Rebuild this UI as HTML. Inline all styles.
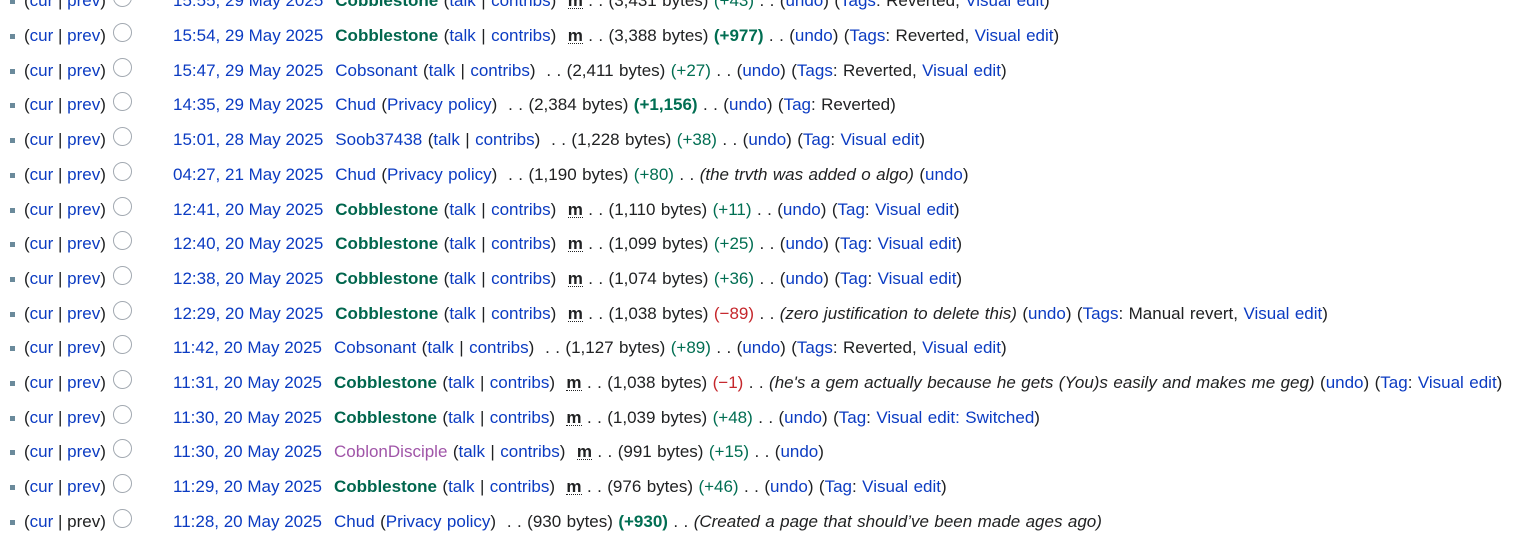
<!DOCTYPE html>
<html><head><meta charset="utf-8"><style>
body{margin:0;width:1516px;height:543px;overflow:hidden;background:#fff;font-family:"Liberation Sans",Arial,sans-serif;font-size:17px;color:#202122;word-spacing:0.7px}
.r{position:absolute;left:0;height:22px;line-height:22px;white-space:nowrap}
.b{position:absolute;left:10px;top:9px;width:5px;height:5px;background:#6a8a9b}
.cp{position:absolute;left:24px;top:0;word-spacing:0}
.rd{position:absolute;left:113px;top:-2px;width:17px;height:17px;border:1px solid #a2a9b1;border-radius:50%}
.t{position:absolute;left:173px;top:0}
.d{margin-right:12px}
a{color:#0b3bc2;text-decoration:none}
.g{color:#00664d;font-weight:bold}
.pos{color:#006e52}
.neg{color:#c5262b}
.pu{color:#a055a8}
.m{font-weight:bold;border-bottom:1px dotted #202122;line-height:14px;display:inline-block;margin-left:6px}
i{font-style:italic}
</style></head><body>
<div id="c"></div>
<script>
const rows=[
["15:55, 29 May 2025",'<a class="g">Cobblestone</a> (<a>talk</a> | <a>contribs</a>) <span class="m">m</span> . . (3,431 bytes) <span class="pos">(+43)</span> . . (<a>undo</a>) (<a>Tags</a>: Reverted, <a>Visual edit</a>)'],
["15:54, 29 May 2025",'<a class="g">Cobblestone</a> (<a>talk</a> | <a>contribs</a>) <span class="m">m</span> . . (3,388 bytes) <b class="pos">(+977)</b> . . (<a>undo</a>) (<a>Tags</a>: Reverted, <a>Visual edit</a>)'],
["15:47, 29 May 2025",'<a>Cobsonant</a> (<a>talk</a> | <a>contribs</a>) &nbsp;. . (2,411 bytes) <span class="pos">(+27)</span> . . (<a>undo</a>) (<a>Tags</a>: Reverted, <a>Visual edit</a>)'],
["14:35, 29 May 2025",'<a>Chud</a> (<a>Privacy policy</a>) &nbsp;. . (2,384 bytes) <b class="pos">(+1,156)</b> . . (<a>undo</a>) (<a>Tag</a>: Reverted)'],
["15:01, 28 May 2025",'<a>Soob37438</a> (<a>talk</a> | <a>contribs</a>) &nbsp;. . (1,228 bytes) <span class="pos">(+38)</span> . . (<a>undo</a>) (<a>Tag</a>: <a>Visual edit</a>)'],
["04:27, 21 May 2025",'<a>Chud</a> (<a>Privacy policy</a>) &nbsp;. . (1,190 bytes) <span class="pos">(+80)</span> . . <i>(the trvth was added o algo)</i> (<a>undo</a>)'],
["12:41, 20 May 2025",'<a class="g">Cobblestone</a> (<a>talk</a> | <a>contribs</a>) <span class="m">m</span> . . (1,110 bytes) <span class="pos">(+11)</span> . . (<a>undo</a>) (<a>Tag</a>: <a>Visual edit</a>)'],
["12:40, 20 May 2025",'<a class="g">Cobblestone</a> (<a>talk</a> | <a>contribs</a>) <span class="m">m</span> . . (1,099 bytes) <span class="pos">(+25)</span> . . (<a>undo</a>) (<a>Tag</a>: <a>Visual edit</a>)'],
["12:38, 20 May 2025",'<a class="g">Cobblestone</a> (<a>talk</a> | <a>contribs</a>) <span class="m">m</span> . . (1,074 bytes) <span class="pos">(+36)</span> . . (<a>undo</a>) (<a>Tag</a>: <a>Visual edit</a>)'],
["12:29, 20 May 2025",'<a class="g">Cobblestone</a> (<a>talk</a> | <a>contribs</a>) <span class="m">m</span> . . (1,038 bytes) <span class="neg">(−89)</span> . . <i>(zero justification to delete this)</i> (<a>undo</a>) (<a>Tags</a>: Manual revert, <a>Visual edit</a>)'],
["11:42, 20 May 2025",'<a>Cobsonant</a> (<a>talk</a> | <a>contribs</a>) &nbsp;. . (1,127 bytes) <span class="pos">(+89)</span> . . (<a>undo</a>) (<a>Tags</a>: Reverted, <a>Visual edit</a>)'],
["11:31, 20 May 2025",'<a class="g">Cobblestone</a> (<a>talk</a> | <a>contribs</a>) <span class="m">m</span> . . (1,038 bytes) <span class="neg">(−1)</span> . . <i>(he\'s a gem actually because he gets (You)s easily and makes me geg)</i> (<a>undo</a>) (<a>Tag</a>: <a>Visual edit</a>)'],
["11:30, 20 May 2025",'<a class="g">Cobblestone</a> (<a>talk</a> | <a>contribs</a>) <span class="m">m</span> . . (1,039 bytes) <span class="pos">(+48)</span> . . (<a>undo</a>) (<a>Tag</a>: <a>Visual edit: Switched</a>)'],
["11:30, 20 May 2025",'<a class="pu">CoblonDisciple</a> (<a>talk</a> | <a>contribs</a>) <span class="m">m</span> . . (991 bytes) <span class="pos">(+15)</span> . . (<a>undo</a>)'],
["11:29, 20 May 2025",'<a class="g">Cobblestone</a> (<a>talk</a> | <a>contribs</a>) <span class="m">m</span> . . (976 bytes) <span class="pos">(+46)</span> . . (<a>undo</a>) (<a>Tag</a>: <a>Visual edit</a>)'],
["11:28, 20 May 2025",'<a>Chud</a> (<a>Privacy policy</a>) &nbsp;. . (930 bytes) <b class="pos">(+930)</b> . . <i>(Created a page that should’ve been made ages ago)</i>']
];
let h='';
rows.forEach((r,i)=>{
 const y=Math.round(0.3+34.7*i-10);
 const prev=i==rows.length-1?'prev':'<a>prev</a>';
 h+=`<div class="r" style="top:${y}px;width:1516px"><span class="b"></span><span class="cp">(<a>cur</a> | ${prev})</span><span class="rd"></span><span class="t"><a class="d" style="word-spacing:0">${r[0]}</a>${r[1]}</span></div>`;
});
document.getElementById('c').innerHTML=h;
</script>
</body></html>
